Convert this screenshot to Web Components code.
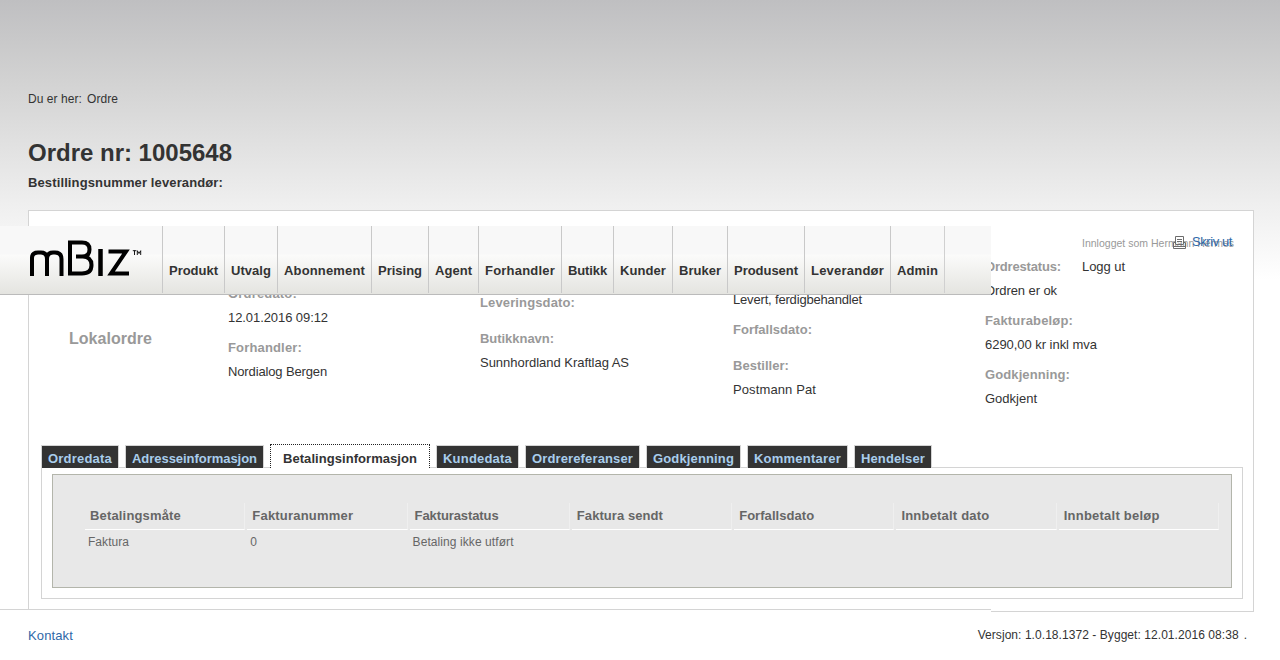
<!DOCTYPE html>
<html lang="no">
<head>
<meta charset="utf-8">
<title>Ordre nr: 1005648</title>
<style>
html,body{margin:0;height:660px;overflow:hidden}
body{font:13px/24px "Liberation Sans",Arial,sans-serif;color:#333;background:#fff}
</style>
</head>
<body>
<order-app></order-app>
<script>
const define=(name,html,setup)=>customElements.define(name,class extends HTMLElement{
  connectedCallback(){
    if(this.shadowRoot)return;
    const t=document.createElement('template');
    t.innerHTML=typeof html==='function'?html(this):html;
    this.attachShadow({mode:'open'}).append(t.content.cloneNode(true));
    if(setup)setup(this);
  }
});

/* Single-line text tracked to an exact advance width (attribute w, in px). */
define('fit-text','<style>:host{display:inline-block;white-space:nowrap}</style><slot></slot>',el=>{
  const w=+el.getAttribute('w');
  if(!w)return;
  const n=el.textContent.length;
  el.style.letterSpacing=((w-el.getBoundingClientRect().width)/n).toFixed(4)+'px';
  el.style.width=w+'px';
});

define('brand-logo',`<style>:host{display:block;width:114px;height:40px}svg{display:block}</style>
<svg width="114" height="40" viewBox="29 238 114 40" fill="none" stroke="#000" stroke-width="4">
<path d="M32 276V258Q32 252.500 38 252.500H41Q47 252.500 47 259V276M47 259Q47 252.500 53 252.500H55Q61.500 252.500 61.500 259V276"/>
<path d="M70 242.500H82Q89.500 242.500 89.500 249.500Q89.500 256.500 82 256.500H76M83 256.500Q91.500 257 91.500 265Q91.500 273.500 82 273.500H70V240.500"/>
<path d="M100.500 249V276" stroke-width="4.500"/>
<path d="M108.500 251.500H126L111 273.500H129"/>
<path d="M132.800 250.700H136.300M134.500 250.500V255M137.300 255V250.700L139 253.500L140.700 250.700V255" stroke-width="0.900"/>
</svg>`);

define('nav-item',`<style>:host{display:block;box-sizing:border-box;height:67px;border-left:1px solid #c9c9c9;padding:33px 6px 0;font-weight:bold}</style><slot></slot>`);

const nav=[['Produkt',49],['Utvalg',40],['Abonnement',81],['Prising',44],['Agent',37],['Forhandler',70],['Butikk',39],['Kunder',46],['Bruker',42],['Produsent',64],['Leverandør',73],['Admin',41]];
define('top-bar',`<style>
:host{display:flex;box-sizing:border-box;width:991px;height:69px;border-bottom:1px solid #bbb;background:linear-gradient(#f8f8f8 0,#f8f8f8 28px,#fbfbfa 29px,#e4e4e0 68px)}
brand-logo{margin:12px 19px 0 29px}
.end{width:0;height:67px;border-left:1px solid #d0d0d0}
</style><brand-logo></brand-logo>${nav.map(([t,w])=>`<nav-item><fit-text w="${w}">${t}</fit-text></nav-item>`).join('')}<span class="end"></span>`);

define('user-box',`<style>:host{display:block;line-height:24px}
div{font-size:10.500px;line-height:22px;color:#999;height:23px}
</style><div><fit-text w="152">Innlogget som Hermann Hermes</fit-text></div><fit-text w="43">Logg ut</fit-text>`);

define('print-link',`<style>:host{display:flex;align-items:flex-start;color:#2f68a8}svg{margin:6px 5px 0 0}</style>
<svg width="14" height="14" viewBox="0 0 14 14" fill="none" stroke="#6c6c6c"><path d="M2.500 8V.5H10.500V8M4 3.500H9M4 5.500H9M2.500 6.500H.5V12.500H12.500V6.500H10.500M2.500 8.500H10.500M1 10.500H12"/></svg><fit-text w="40">Skriv ut</fit-text>`);

define('info-field',el=>`<style>:host{display:block;margin-bottom:6px}
.l{height:24px;font-weight:bold;color:#999}.v{height:${el.getAttribute('value')?24:6}px}</style>
<div class="l">${el.getAttribute('label')?`<fit-text w="${el.getAttribute('lw')}">${el.getAttribute('label')}</fit-text>`:''}</div>
<div class="v">${el.getAttribute('value')?`<fit-text w="${el.getAttribute('vw')}">${el.getAttribute('value')}</fit-text>`:''}</div>`);

const cols=[
 [71,['Ordredato:',69,'12.01.2016 09:12',100],['Forhandler:',74,'Nordialog Bergen',99]],
 [80,['Leveringsdato:',95,'',0],['Butikknavn:',74,'Sunnhordland Kraftlag AS',149]],
 [53,['',0,'Levert, ferdigbehandlet',129],['Forfallsdato:',79,'',0],['Bestiller:',56,'Postmann Pat',83]],
 [44,['Ordrestatus:',76,'Ordren er ok',72],['Fakturabeløp:',88,'6290,00 kr inkl mva',112],['Godkjenning:',85,'Godkjent',52]]
];
define('order-summary',`<style>
:host{display:grid;grid-template-columns:199px 252px 253px 252px 1fr;height:234px}
h2{margin:116px 0 0 40px;font-size:16px;line-height:24px;color:#999}
</style><h2><fit-text w="83">Lokalordre</fit-text></h2>${cols.map(([p,...f])=>`<div style="padding-top:${p}px">${f.map(([l,lw,v,vw])=>`<info-field label="${l}" lw="${lw}" value="${v}" vw="${vw}"></info-field>`).join('')}</div>`).join('')}`);

define('tab-item',`<style>
:host{display:block;box-sizing:border-box;height:23px;line-height:25px;border:1px solid #d4d4d4;border-bottom:0;padding:0 6px;background:#333;color:#a9cdec;font-weight:bold}
:host([active]){height:24px;line-height:27px;border:1px dotted #222;border-bottom:0;padding:0 12px;background:#fff;color:#333}
</style><slot></slot>`);

const tabs=[['Ordredata',64],['Adresseinformasjon',125],['Betalingsinformasjon',134],['Kundedata',69],['Ordrereferanser',101],['Godkjenning',81],['Kommentarer',87],['Hendelser',64]];
define('tab-strip',`<style>:host{display:flex;gap:6px;align-items:flex-end;height:24px;margin-bottom:-1px;position:relative}</style>${tabs.map(([t,w],i)=>`<tab-item${i==2?' active':''}><fit-text w="${w}">${t}</fit-text></tab-item>`).join('')}`);

const heads=[['Betalingsmåte',91],['Fakturanummer',101],['Fakturastatus',84],['Faktura sendt',86],['Forfallsdato',75],['Innbetalt dato',88],['Innbetalt beløp',96]];
const cells=[['Faktura',41],['0',7],['Betaling ikke utført',101],0,0,0,0];
define('payment-table',`<style>
:host{display:grid;grid-template-columns:repeat(7,1fr);column-gap:2px;width:1134px;color:#666}
.h{box-sizing:border-box;height:27px;border-right:1px solid #efefef;border-bottom:1px solid #fff;padding-left:5px;line-height:25px;font-weight:bold}
.c{font-size:12px;line-height:24px;padding-left:3px}
</style>${heads.map(([t,w])=>`<div class="h"><fit-text w="${w}">${t}</fit-text></div>`).join('')}${cells.map(c=>`<div class="c">${c?`<fit-text w="${c[1]}">${c[0]}</fit-text>`:''}</div>`).join('')}`);

define('order-panel',`<style>
:host{display:block;box-sizing:border-box;width:1226px;height:402px;border:1px solid #d4d4d4;background:#fff}
.tabs{margin:-1px 10px 0 12px}
.frame{box-sizing:border-box;height:132px;border:1px solid #d4d4d4;padding:6px 10px}
.box{box-sizing:border-box;height:114px;border:1px solid #b3b5ab;background:#e8e8e8;padding:28px 0 0 32px}
</style><order-summary></order-summary><div class="tabs"><tab-strip></tab-strip><div class="frame"><div class="box"><payment-table></payment-table></div></div></div>`);

define('page-footer',`<style>
:host{display:flex;justify-content:space-between;box-sizing:border-box;width:991px;height:51px;border-top:1px solid #d4d4d4;background:#fff;padding:13px 0 0 28px}
a{color:#2f68a8;padding-top:1px}.v{font-size:12px;margin-right:-256px;white-space:pre}
</style><a><fit-text w="45">Kontakt</fit-text></a><span class="v"><fit-text w="261">Versjon: 1.0.18.1372 - Bygget: 12.01.2016 08:38</fit-text><fit-text style="margin-left:5px">.</fit-text></span>`);

define('order-app',`<style>
:host{display:block;position:relative;height:660px;background:linear-gradient(#bfbfc1 0,#d2d2d2 80px,#efefef 205px,#fff 280px)}
main{padding:87px 0 0 28px}
.crumb{font-size:12px;line-height:24px;display:flex;gap:5px;height:24px}
h1{margin:27px 0 0;font-size:24px;line-height:30px}
h3{margin:3px 0 15px;font-size:13px;line-height:24px;height:24px}
top-bar{position:absolute;left:0;top:226px}
user-box{position:absolute;left:1082px;top:232px}
print-link{position:absolute;left:1173px;top:230px}
page-footer{position:absolute;left:0;top:609px}
</style>
<main>
<div class="crumb"><fit-text w="54">Du er her:</fit-text><fit-text w="31">Ordre</fit-text></div>
<h1><fit-text w="204">Ordre nr: 1005648</fit-text></h1>
<h3><fit-text w="195">Bestillingsnummer leverandør:</fit-text></h3>
<order-panel></order-panel>
</main>
<top-bar></top-bar><user-box></user-box><print-link></print-link><page-footer></page-footer>`);
</script>
</body>
</html>
